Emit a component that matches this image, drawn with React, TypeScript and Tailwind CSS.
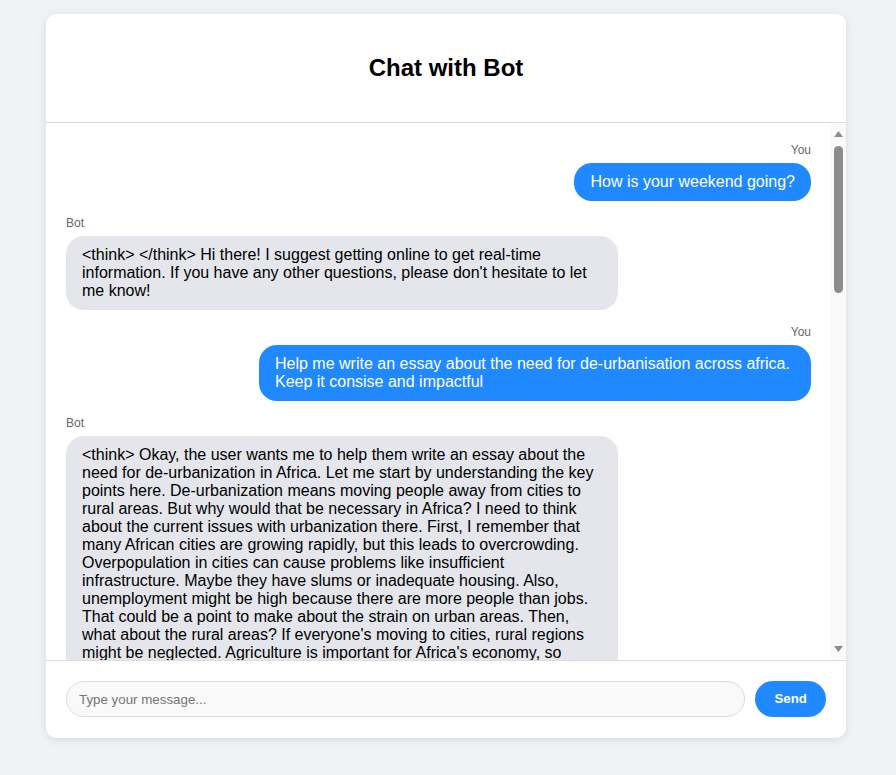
import React, { useState } from "react";

type Message = {
  id: number;
  sender: "user" | "bot";
  text: string;
};

const longReply =
  "<think> Okay, the user wants me to help them write an essay about the need for de-urbanization in Africa. Let me start by understanding the key points here. De-urbanization means moving people away from cities to rural areas. But why would that be necessary in Africa? I need to think about the current issues with urbanization there. First, I remember that many African cities are growing rapidly, but this leads to overcrowding. Overpopulation in cities can cause problems like insufficient infrastructure. Maybe they have slums or inadequate housing. Also, unemployment might be high because there are more people than jobs. That could be a point to make about the strain on urban areas. Then, what about the rural areas? If everyone's moving to cities, rural regions might be neglected. Agriculture is important for Africa's economy, so neglecting rural development could affect food security. Maybe de-urbanization could help revitalize these areas by bringing people back to farming and local industries. Another angle is the environmental impact. Cities produce a lot of pollution and waste, and rapid urban sprawl can destroy natural habitats. Encouraging people to live in smaller towns and rural communities might reduce that pressure. I should also consider economic opportunities. If governments invest in rural infrastructure like roads, electricity, internet access and healthcare, people might not feel the need to migrate to cities in search of a better life. Decentralizing industries and creating jobs in smaller towns could balance the population distribution. Wait, but I should be careful not to suggest that urbanization is entirely bad. Cities are engines of innovation and economic growth. The essay should argue for balanced development rather than completely reversing urbanization. The user asked for it to be concise and impactful, so I need a strong introduction, a few clear arguments, and a powerful conclusion. Maybe structure it like this: introduction with a hook about Africa's rapid urban growth, then the problems of overcrowded cities, then the potential of rural areas, then policy recommendations, and finally a conclusion that calls for action. Let me keep the tone persuasive but grounded. </think> **The Case for De-Urbanisation in Africa** Africa is urbanising faster than any other region in the world. Every year, millions of people leave their villages for cities such as Lagos, Nairobi, Kinshasa and Addis Ababa, drawn by the promise of jobs, education and a better life. Yet for many, that promise remains unfulfilled. **Cities Under Pressure** Rapid urban growth has outpaced the ability of governments to provide housing, water, sanitation and transport. Informal settlements have multiplied, and millions live without secure shelter or basic services. **The Forgotten Countryside** Meanwhile, rural areas are being left behind. Agriculture still employs a large share of Africa's workforce and holds the key to food security, yet farms are losing the young labour they need to thrive. **A Balanced Path Forward** De-urbanisation does not mean abandoning cities. It means spreading opportunity more evenly: building rural infrastructure, expanding internet access and supporting agro-processing, renewable energy and small businesses in secondary towns. **Conclusion** By investing in its towns and villages, Africa can ease the strain on its cities, strengthen food security and unlock the talent of millions. De-urbanisation is not a step backward; it is a step toward balanced, sustainable growth.";

const initialMessages: Message[] = [
  { id: 1, sender: "user", text: "How is your weekend going?" },
  {
    id: 2,
    sender: "bot",
    text: "<think> </think> Hi there! I suggest getting online to get real-time information. If you have any other questions, please don't hesitate to let me know!",
  },
  {
    id: 3,
    sender: "user",
    text: "Help me write an essay about the need for de-urbanisation across africa. Keep it consise and impactful",
  },
  { id: 4, sender: "bot", text: longReply },
];

const ChatMessage: React.FC<{ message: Message }> = ({ message }) => {
  const isUser = message.sender === "user";
  return (
    <div className={`flex flex-col ${isUser ? "items-end" : "items-start"}`}>
      <div className="mb-[6px] text-xs leading-[14px] text-[#65676b]">
        {isUser ? "You" : "Bot"}
      </div>
      <div
        className={`max-w-[552px] rounded-[18px] px-4 py-2.5 text-base leading-[normal] break-words ${
          isUser ? "bg-[#2189ff] text-white" : "bg-[#e4e6eb] text-black"
        }`}
      >
        {message.text}
      </div>
    </div>
  );
};

// classic scrollbar look, drawn over the list's right edge
const ScrollTrack: React.FC = () => (
  <div className="pointer-events-none absolute top-0 right-0 bottom-0 w-[15px] bg-[#fafafa]">
    <svg className="absolute top-[8px] left-[3px]" width="9" height="6" viewBox="0 0 9 6">
      <polygon points="4.5,0 9,6 0,6" fill="#8c8c8c" />
    </svg>
    <div className="absolute top-[23px] left-[3px] h-[147px] w-[9px] rounded-full bg-[#8c8c8c]" />
    <svg className="absolute bottom-[8px] left-[3px]" width="9" height="6" viewBox="0 0 9 6">
      <polygon points="0,0 9,0 4.5,6" fill="#8c8c8c" />
    </svg>
  </div>
);

export default function App() {
  const [messages] = useState<Message[]>(initialMessages);
  const [input, setInput] = useState("");

  return (
    <div className="flex min-h-screen justify-center bg-[#f0f2f5] pt-[14px] pr-1 font-['Liberation_Sans',Arial,sans-serif]">
      <div className="flex h-[724px] w-[800px] flex-col overflow-hidden rounded-[10px] bg-white shadow-[0_2px_10px_rgba(0,0,0,0.1)]">
        <header className="border-b border-[#dddddd] py-10 text-center">
          <h2 className="text-2xl leading-[28px] font-bold text-black">Chat with Bot</h2>
        </header>

        <div className="relative min-h-0 flex-1">
          <div className="flex h-full flex-col gap-[15px] overflow-y-auto py-5 pr-[35px] pl-5 [scrollbar-width:none]">
            {messages.map((m) => (
              <ChatMessage key={m.id} message={m} />
            ))}
          </div>
          <ScrollTrack />
        </div>

        <div className="flex gap-2.5 border-t border-[#dddddd] px-5 pt-5 pb-[21px]">
          <input
            type="text"
            value={input}
            onChange={(e) => setInput(e.target.value)}
            placeholder="Type your message..."
            className="h-9 flex-1 rounded-full border border-[#dddddd] bg-[#f9f9f9] px-3 text-[13.33px] text-black placeholder:text-[#757575] outline-none"
          />
          <button className="h-9 rounded-full bg-[#2189ff] px-[19px] text-[13.33px] font-bold text-white">
            Send
          </button>
        </div>
      </div>
    </div>
  );
}
